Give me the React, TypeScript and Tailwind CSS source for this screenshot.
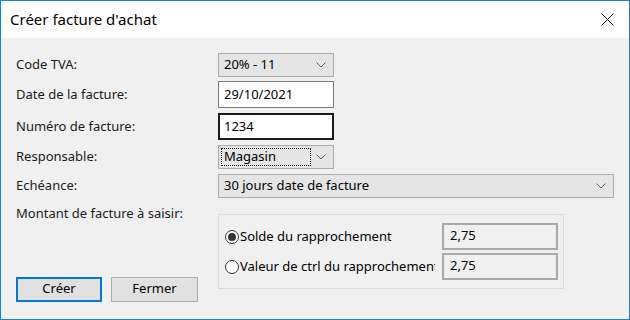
import React from 'react';

const font = { fontFamily: '"Noto Sans", "Open Sans", sans-serif' };

const Chevron: React.FC = () => (
  <svg width="10" height="6" viewBox="0 0 10 6" className="shrink-0">
    <polyline points="0.5,0.5 5,5 9.5,0.5" fill="none" stroke="#606060" strokeWidth="1" />
  </svg>
);

const Combo: React.FC<{ value: string; width: string; focused?: boolean; height?: string }> = ({ value, width, focused, height = 'h-[24px]' }) => (
  <div className={`${width} ${height} flex items-center justify-between bg-[#e5e5e5] border border-[#adadad] pl-[2px] pr-[7px]`}>
    {focused ? (
      <span className="h-[18px] w-[90px] flex items-center border border-dotted border-black px-[2px] text-black">{value}</span>
    ) : (
      <span className="pl-[3px] text-black">{value}</span>
    )}
    <Chevron />
  </div>
);

const Row: React.FC<{ label: string; mt: string; children: React.ReactNode }> = ({ label, mt, children }) => (
  <div className={`flex items-center ${mt}`}>
    <div className="w-[217px] pl-[15px] text-[#1b1b1b]">{label}</div>
    {children}
  </div>
);

const Radio: React.FC<{ checked?: boolean }> = ({ checked }) => (
  <span className="w-[14px] h-[14px] rounded-full border border-[#333] bg-white flex items-center justify-center shrink-0">
    {checked && <span className="w-[8px] h-[8px] rounded-full bg-[#333]" />}
  </span>
);

const App: React.FC = () => {
  return (
    <div style={font} className="w-[630px] h-[320px] flex flex-col border border-[#1883d7] bg-[#f0f0f0] text-[13px] overflow-hidden">
      <div className="h-[37px] shrink-0 bg-white flex items-center justify-between pl-[9px] pr-[15px]">
        <span className="text-[15px] text-black">Créer facture d'achat</span>
        <svg width="13" height="13" viewBox="0 0 13 13">
          <line x1="0.5" y1="0.5" x2="12.5" y2="12.5" stroke="#111" strokeWidth="1" />
          <line x1="12.5" y1="0.5" x2="0.5" y2="12.5" stroke="#111" strokeWidth="1" />
        </svg>
      </div>

      <div className="flex flex-col">
        <Row label="Code TVA:" mt="mt-[15px]">
          <Combo value="20% - 11" width="w-[116px]" />
        </Row>
        <Row label="Date de la facture:" mt="mt-[4px]">
          <div className="w-[116px] h-[27px] bg-white border border-[#7a7a7a] flex items-center pl-[5px] text-black">29/10/2021</div>
        </Row>
        <Row label="Numéro de facture:" mt="mt-[5px]">
          <div className="w-[116px] h-[27px] bg-white border-2 border-[#1a1a1a] flex items-center pl-[4px] text-black">1234</div>
        </Row>
        <Row label="Responsable:" mt="mt-[5px]">
          <Combo value="Magasin" width="w-[116px]" focused />
        </Row>
        <Row label="Echéance:" mt="mt-[5px]">
          <Combo value="30 jours date de facture" width="w-[396px]" />
        </Row>

        <div className="flex mt-[16px]">
          <div className="w-[217px] pl-[15px] flex flex-col">
            <span className="text-[#1b1b1b] -mt-[10px]">Montant de facture à saisir:</span>
            <div className="flex gap-[9px] mt-[53px]">
              <button className="w-[86px] h-[25px] bg-[#e1e1e1] border-2 border-[#0078d7] text-black">Créer</button>
              <button className="w-[87px] h-[25px] bg-[#e1e1e1] border border-[#adadad] text-black">Fermer</button>
            </div>
          </div>
          <div className="w-[346px] h-[75px] border border-[#dcdcdc] flex flex-col justify-center gap-[3px] pl-[6px] pr-[5px]">
            <div className="flex items-center justify-between">
              <div className="flex items-center gap-[1px] text-black">
                <Radio checked />
                <span>Solde du rapprochement</span>
              </div>
              <div className="w-[116px] h-[27px] border-2 border-[#a8a8a8] pl-[6px] pt-[1px] text-black leading-[18px]">2,75</div>
            </div>
            <div className="flex items-center justify-between">
              <div className="flex items-center gap-[1px] text-black w-[210px] overflow-hidden whitespace-nowrap">
                <Radio />
                <span>Valeur de ctrl du rapprochement</span>
              </div>
              <div className="w-[116px] h-[27px] border-2 border-[#a8a8a8] pl-[6px] pt-[1px] text-black leading-[18px]">2,75</div>
            </div>
          </div>
        </div>
      </div>
    </div>
  );
};

export default App;
